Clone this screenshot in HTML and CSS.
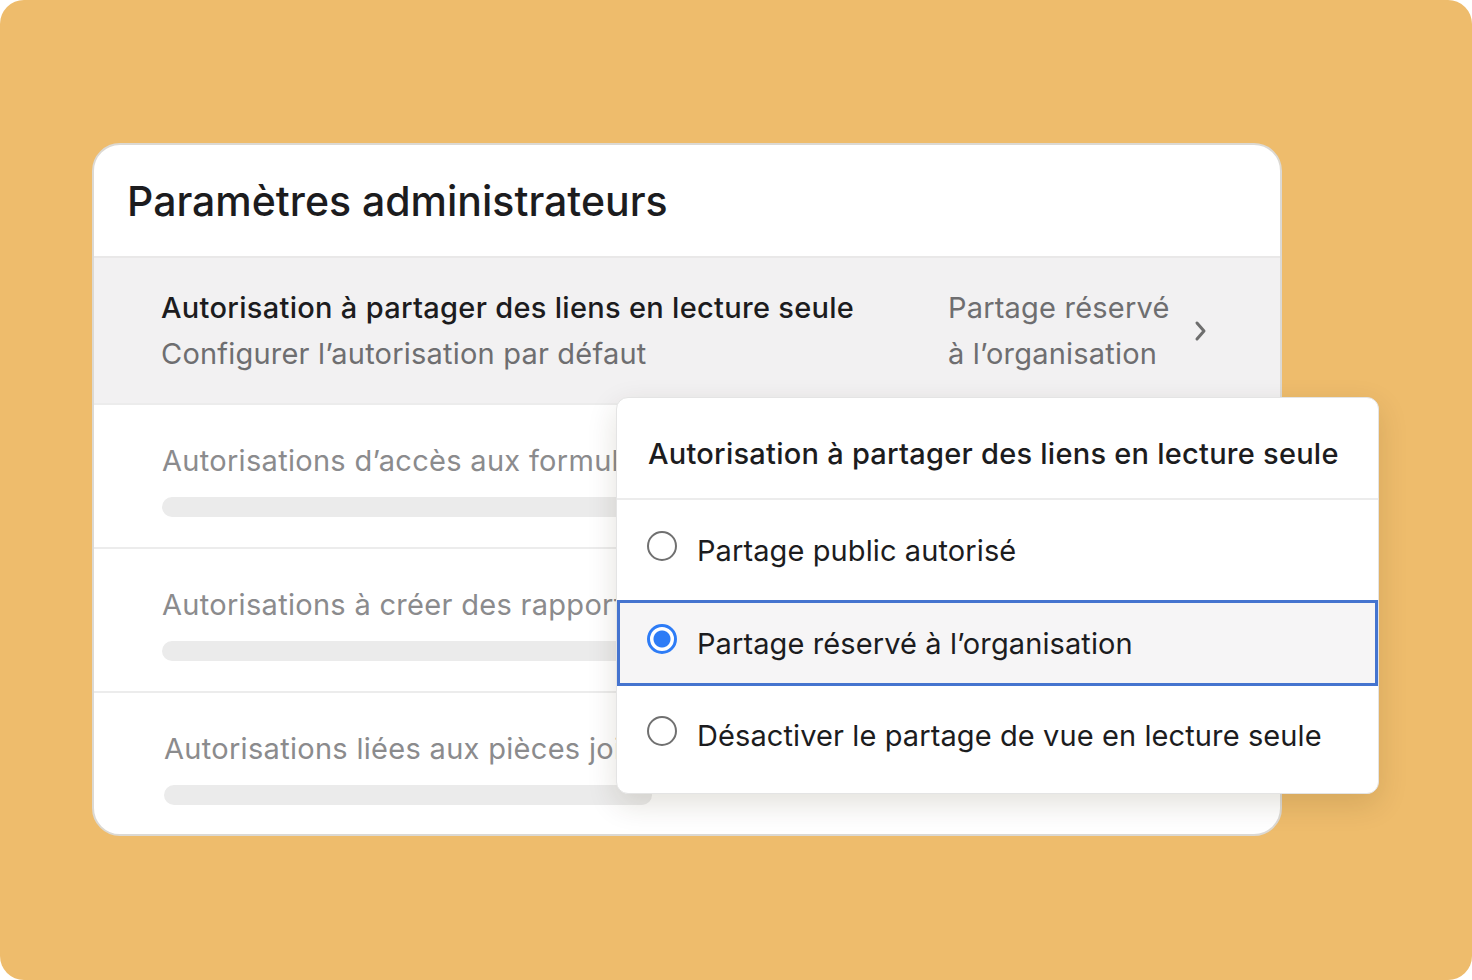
FILE: index.html
```html
<!DOCTYPE html>
<html lang="fr">
<head>
    <meta charset="UTF-8">
    <meta name="viewport" content="width=device-width, initial-scale=1.0">
    <title>Paramètres administrateurs</title>
    <link rel="stylesheet" href="styles.css">
</head>

<body>

    <div class="backdrop">
        <div class="card">
            <div class="card-header">
                <h1>Paramètres administrateurs</h1>
            </div>

            <div class="row row-active">
                <div class="row-text">
                    <div class="row-title">Autorisation à partager des liens en lecture seule</div>
                    <div class="row-sub">Configurer l’autorisation par défaut</div>
                </div>
                <div class="row-value">Partage réservé<br>à l’organisation</div>
                <svg class="chevron" width="14" height="22" viewBox="0 0 14 22">
                    <path d="M3 3 L10 11 L3 19" fill="none" stroke="#6e6e6e" stroke-width="3" stroke-linecap="round" stroke-linejoin="round"/>
                </svg>
            </div>

            <div class="row row-muted">
                <div class="muted-title">Autorisations d’accès aux formulaires</div>
                <div class="bar"></div>
            </div>
            <div class="row row-muted">
                <div class="muted-title">Autorisations à créer des rapports</div>
                <div class="bar"></div>
            </div>
            <div class="row row-muted row-last">
                <div class="muted-title">Autorisations liées aux pièces jointes</div>
                <div class="bar"></div>
            </div>

            <!-- menu opened over the rows -->
            <div class="menu">
                <div class="menu-header">Autorisation à partager des liens en lecture seule</div>
                <div class="option option-first">
                    <span class="radio"></span>
                    <span>Partage public autorisé</span>
                </div>
                <div class="option option-selected">
                    <span class="radio radio-on"></span>
                    <span>Partage réservé à l’organisation</span>
                </div>
                <div class="option option-last">
                    <span class="radio"></span>
                    <span>Désactiver le partage de vue en lecture seule</span>
                </div>
            </div>
        </div>
    </div>

</body>
</html>
```

FILE: styles.css
```css
/* Page */
body {
    margin: 0;
    background: #ffffff;
    font-family: Inter, "Noto Sans", sans-serif;
}

.backdrop {
    width: 1472px;
    height: 980px;
    box-sizing: border-box;
    background: #eebc6c;
    border-radius: 24px;
    padding: 143px 0 0 92px;
}

/* Settings card */
.card {
    position: relative;
    width: 1190px;
    height: 693px;
    box-sizing: border-box;
    background: #ffffff;
    border: 2px solid #dcd9d3;
    border-radius: 28px;
}

.card-header {
    height: 111px;
    display: flex;
    align-items: center;
    padding-left: 33px;
    border-bottom: 2px solid #e9e8e8;
}

h1 {
    margin: 0;
    font-size: 41px;
    font-weight: 500;
    color: #1c1c1e;
}

.row {
    height: 142px;
    border-bottom: 2px solid #ececec;
    box-sizing: content-box;
}

.row-active {
    height: 145px;
    display: flex;
    align-items: center;
    background: #f2f1f2;
    padding: 0 72px 0 67px;
}

.row-text {
    flex: 1;
}

.row-title {
    font-size: 29px;
    font-weight: 500;
    color: #1c1c1e;
    line-height: 46px;
    letter-spacing: 0.3px;
}

.row-sub,
.row-value {
    font-size: 29px;
    color: #6e6e70;
    line-height: 46px;
    letter-spacing: 0.2px;
}

.row-value {
    width: 238px;
}

.chevron {
    margin-left: 8px;
}

/* Rows behind the menu */
.row-muted {
    padding: 34px 0 0 68px;
    height: 108px;
}

.row-last {
    border-bottom: none;
    padding-left: 70px;
}

.muted-title {
    font-size: 29px;
    color: #8b8b8d;
    line-height: 44px;
    letter-spacing: 0.3px;
    white-space: nowrap;
}

.bar {
    width: 488px;
    height: 20px;
    margin-top: 14px;
    border-radius: 10px;
    background: #ebebeb;
}

/* Dropdown */
.menu {
    position: absolute;
    left: 522px;
    top: 252px;
    width: 763px;
    height: 397px;
    box-sizing: border-box;
    background: #ffffff;
    border: 1px solid #e4e4e4;
    border-radius: 12px;
    box-shadow: 0 10px 30px rgba(60, 40, 10, 0.14);
}

.menu-header {
    height: 102px;
    box-sizing: border-box;
    display: flex;
    align-items: center;
    padding: 10px 0 0 31px;
    font-size: 29px;
    font-weight: 500;
    color: #1c1c1e;
    letter-spacing: 0.25px;
    border-bottom: 2px solid #ececec;
}

.option {
    box-sizing: border-box;
    display: flex;
    align-items: center;
    gap: 20px;
    padding-left: 30px;
    font-size: 29px;
    color: #1c1c1e;
    letter-spacing: 0.1px;
}

.option-first {
    height: 100px;
}

.option-last {
    height: 98px;
}

.option-selected {
    height: 86px;
    background: #f6f5f6;
    border: 3px solid #4574cf;
    padding-left: 27px;
}

.radio {
    width: 30px;
    height: 30px;
    box-sizing: border-box;
    border: 2px solid #707070;
    border-radius: 50%;
    margin-top: -8px;
}

.radio-on {
    border: 3px solid #2e7cf6;
    background: radial-gradient(circle, #2e7cf6 0 8px, #ffffff 9px);
}
```
